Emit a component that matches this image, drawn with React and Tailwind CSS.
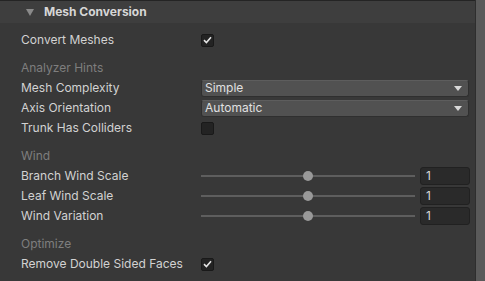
const font = { fontFamily: 'Inter, "Noto Sans", sans-serif' };

function Check({ on }) {
  return (
    <div className="w-[13px] h-[13px] rounded-[2px] bg-[#232323] border border-[#191919] flex items-center justify-center">
      {on && (
        <svg width="9" height="8" viewBox="0 0 9 8">
          <path d="M1 4.2 L3.4 6.5 L8 1.2" stroke="#e4e4e4" strokeWidth="1.6" fill="none" />
        </svg>
      )}
    </div>
  );
}

function Row({ label, children }) {
  return (
    <div className="flex items-center h-[20px]">
      <div className="w-[180px] text-[12px] text-[#d2d2d2] leading-none">{label}</div>
      <div className="flex-1 flex items-center">{children}</div>
    </div>
  );
}

function Hint({ label }) {
  return <div className="h-[20px] mt-[8px] flex items-center text-[12px] text-[#7e7e7e] leading-none">{label}</div>;
}

function Dropdown({ value }) {
  return (
    <div className="w-[268px] h-[17px] rounded-[3px] bg-[#515151] border border-[#2f2f2f] border-t-[#5d5d5d] flex items-center justify-between pl-[3px] pr-[6px]">
      <span className="text-[12px] text-[#e0e0e0] leading-none">{value}</span>
      <svg width="8" height="5" viewBox="0 0 8 5">
        <path d="M0 0 H8 L4 5 Z" fill="#d8d8d8" />
      </svg>
    </div>
  );
}

function Slider() {
  return (
    <div className="flex items-center">
      <div className="relative w-[214px] h-[10px] flex items-center">
        <div className="w-full h-[2px] bg-[#5e5e5e]" />
        <div className="absolute left-[102px] top-0 w-[10px] h-[10px] rounded-full bg-[#999999]" />
      </div>
      <div className="ml-[5px] w-[50px] h-[18px] rounded-[3px] bg-[#2a2a2a] border border-[#212121] flex items-center pl-[5px] text-[12px] text-[#d8d8d8] leading-none">
        1
      </div>
    </div>
  );
}

export default function App() {
  return (
    <div className="w-[485px] h-[281px] bg-[#383838] flex overflow-hidden" style={font}>
      <div className="flex-1 flex flex-col">
        <div className="h-[23px] bg-[#3e3e3e] border-t border-[#242424] flex items-center">
          <svg className="ml-[26px]" width="8" height="7" viewBox="0 0 8 7">
            <path d="M0 0 H8 L4 7 Z" fill="#8a8a8a" />
          </svg>
          <span className="ml-[10px] text-[12px] font-bold text-[#d6d6d6] leading-none">Mesh Conversion</span>
        </div>
        <div className="pl-[21px] pt-[7px]">
          <Row label="Convert Meshes"><Check on /></Row>
          <Hint label="Analyzer Hints" />
          <Row label="Mesh Complexity"><Dropdown value="Simple" /></Row>
          <Row label="Axis Orientation"><Dropdown value="Automatic" /></Row>
          <Row label="Trunk Has Colliders"><Check /></Row>
          <Hint label="Wind" />
          <Row label="Branch Wind Scale"><Slider /></Row>
          <Row label="Leaf Wind Scale"><Slider /></Row>
          <Row label="Wind Variation"><Slider /></Row>
          <Hint label="Optimize" />
          <Row label="Remove Double Sided Faces"><Check on /></Row>
        </div>
      </div>
      <div className="w-[10px] bg-[#5a5a5a] border-l border-[#2e2e2e]" />
    </div>
  );
}
